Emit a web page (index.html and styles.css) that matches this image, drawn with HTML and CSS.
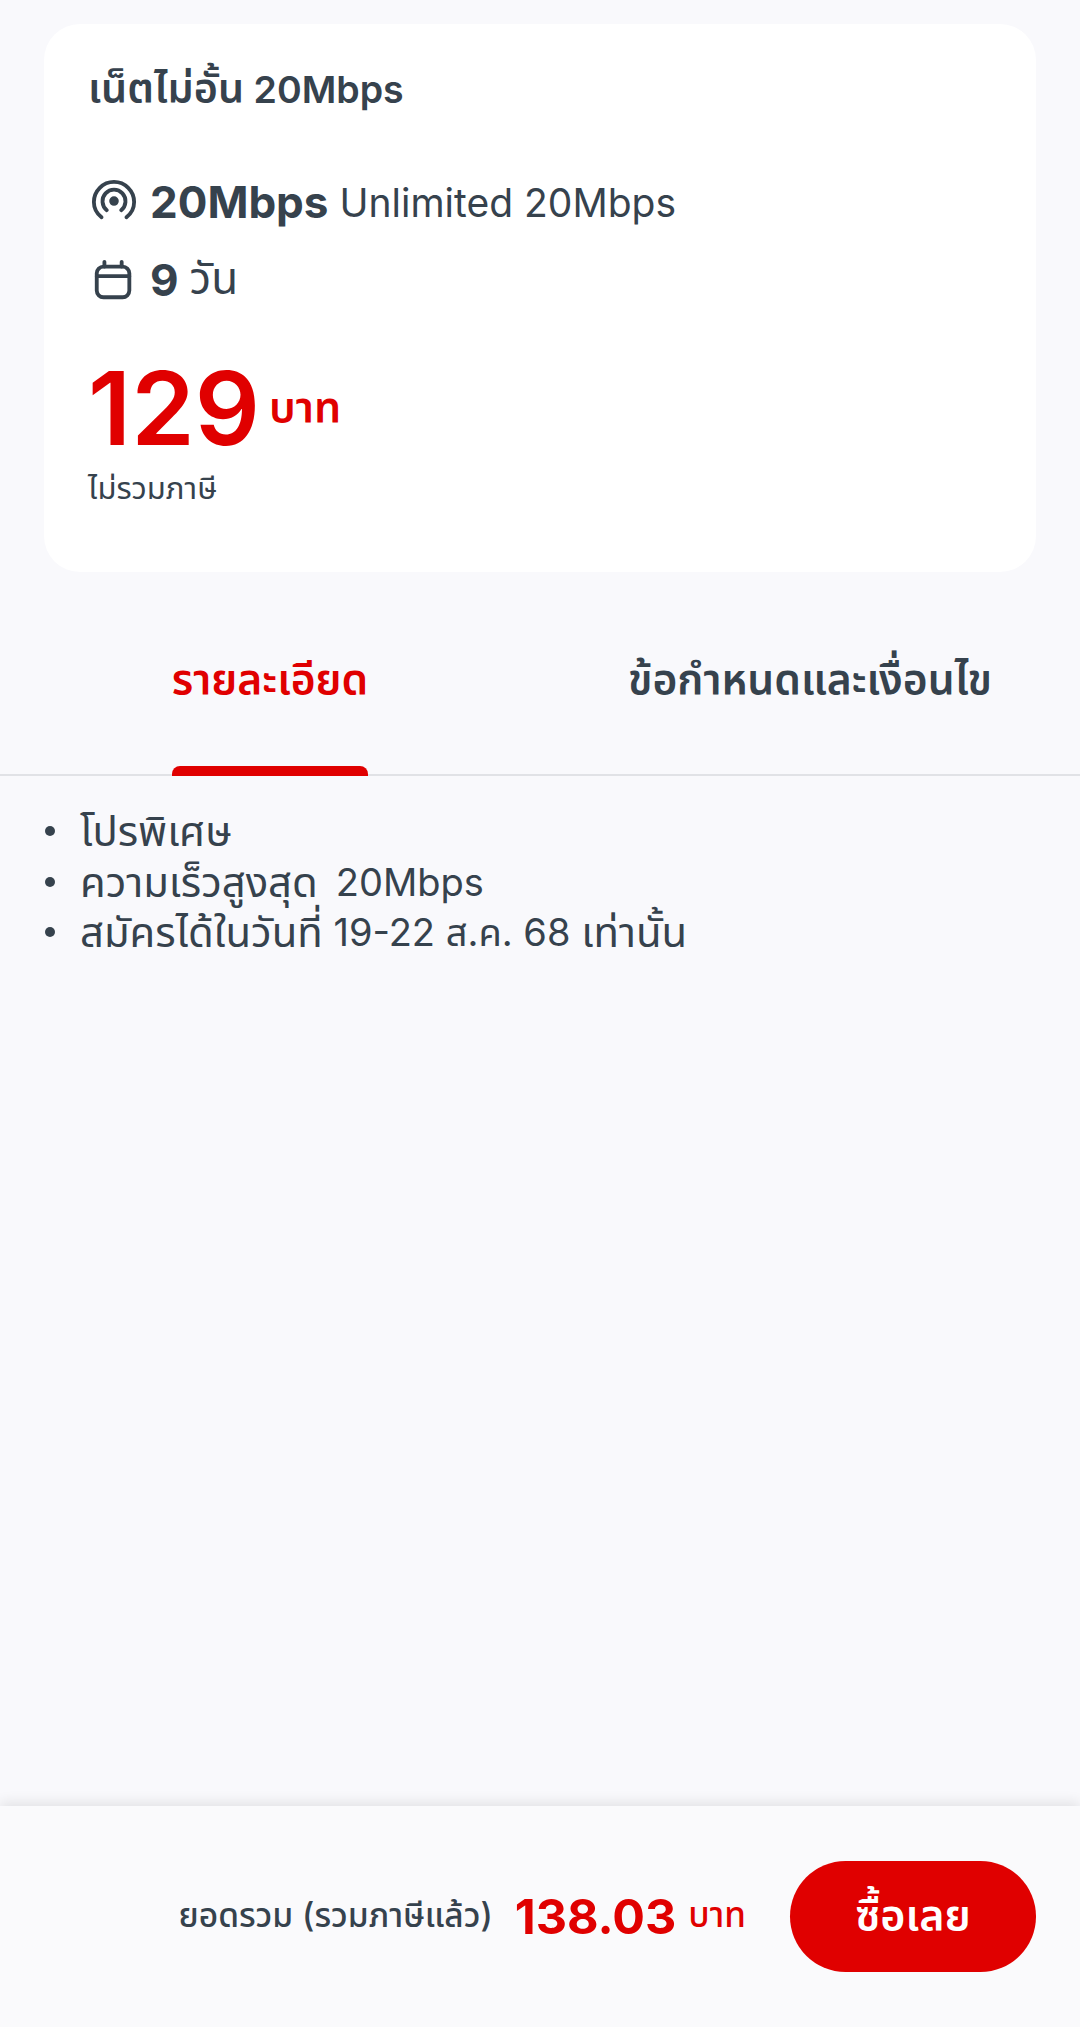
FILE: index.html
```html
<!DOCTYPE html>
<html lang="th">
<head>
<meta charset="utf-8">
<title>เน็ตไม่อั้น 20Mbps</title>
<link rel="stylesheet" href="styles.css">
</head>
<body>
<div class="page">
  <main class="main">
    <section class="card">
      <h1 class="title"><span class="th">เน็ตไม่อั้น</span> 20Mbps</h1>
      <div class="row row-speed">
        <svg class="icon" viewBox="0 0 48 48" fill="none" stroke="#36424d" stroke-width="4" stroke-linecap="round">
          <path d="M11 40C6 36 3 30 3 24a21 21 0 0 1 42 0c0 6-3 12-8 16"/>
          <path d="M16.500 32.500A12 12 0 1 1 31.500 32.500"/>
          <circle cx="24" cy="23" r="4" fill="#36424d" stroke-width="2"/>
        </svg>
        <span class="strong-lg">20Mbps</span>
        <span class="light">Unlimited 20Mbps</span>
      </div>
      <div class="row row-days">
        <svg class="icon" viewBox="0 0 48 48" fill="none" stroke="#36424d" stroke-width="4" stroke-linecap="round" stroke-linejoin="round">
          <rect x="6" y="10" width="34" height="32" rx="7"/>
          <path d="M6 20H40M14 5V10M32 5V10"/>
        </svg>
        <span class="strong-lg">9</span>
        <span class="light days-unit">วัน</span>
      </div>
      <div class="price">
        <span class="price-num">129</span>
        <span class="price-unit">บาท</span>
      </div>
      <p class="vat">ไม่รวมภาษี</p>
    </section>
    <nav class="tabs">
      <div class="tab tab-active"><span class="tab-label">รายละเอียด</span></div>
      <div class="tab"><span class="tab-label">ข้อกำหนดและเงื่อนไข</span></div>
    </nav>
    <ul class="details">
      <li><span class="th">โปรพิเศษ</span></li>
      <li><span class="th">ความเร็วสูงสุด</span> <span class="num">20Mbps</span></li>
      <li><span class="th">สมัครได้ในวันที่</span> 19-22 ส.ค. 68 <span class="th">เท่านั้น</span></li>
    </ul>
  </main>
  <footer class="footer">
    <span class="total-label">ยอดรวม (รวมภาษีแล้ว)</span>
    <span class="total-num">138.03</span>
    <span class="total-unit">บาท</span>
    <button class="buy">ซื้อเลย</button>
  </footer>
</div>
</body>
</html>
```
FILE: styles.css
```css
* { box-sizing: border-box; }
html, body { margin: 0; padding: 0; }
body {
  background: #f9f9fc;
  color: #36424d;
  font-family: Inter, "Noto Sans Thai", "Noto Sans", sans-serif;
}
.page {
  height: 2027px;
  display: flex;
  flex-direction: column;
}
.main { flex: 1; }
.card {
  margin: 24px 44px 0;
  height: 548px;
  padding: 42px 44px 0;
  background: #fff;
  border-radius: 36px;
}
.title {
  margin: 0 0 64px;
  font-size: 37.500px;
  line-height: 44px;
  font-weight: 600;
}
.th { font-size: 1.100em; }
.row {
  display: flex;
  align-items: center;
  height: 52px;
}
.row-speed { margin-bottom: 26px; }
.icon {
  width: 46px;
  height: 46px;
  margin: 0 13px 0 3px;
  flex: none;
}
.strong-lg {
  font-size: 44px;
  font-weight: 700;
  margin-right: 11px;
}
.light {
  font-size: 39px;
  font-weight: 400;
}
.days-unit { font-size: 44px; }
.price {
  display: flex;
  align-items: center;
  margin-top: 40px;
  color: #e00000;
}
.price-num {
  font-size: 102px;
  line-height: 124px;
  font-weight: 600;
}
.price-unit {
  font-size: 43px;
  font-weight: 600;
  margin-left: 9px;
}
.vat {
  margin: 2px 0 0;
  font-size: 31px;
  line-height: 32px;
}
.tabs {
  display: flex;
  height: 204px;
  border-bottom: 2px solid #e1e2e6;
}
.tab {
  flex: 1;
  display: flex;
  justify-content: center;
  font-size: 42.500px;
  font-weight: 600;
}
.tab-label {
  position: relative;
  height: 204px;
  padding-top: 84px;
  line-height: 46px;
}
.tab-active { color: #e00000; }
.tab-active .tab-label::after {
  content: "";
  position: absolute;
  left: 0;
  right: 0;
  bottom: 0;
  height: 10px;
  background: #e00000;
  border-radius: 8px 8px 0 0;
}
.details {
  margin: 30px 0 0;
  padding: 0 0 0 45px;
  list-style: none;
  font-size: 38px;
  line-height: 50.500px;
}
.details li {
  display: flex;
  align-items: center;
  height: 50.500px;
  white-space: pre;
}
.details li::before {
  content: "";
  flex: none;
  width: 10px;
  height: 10px;
  margin-right: 25px;
  border-radius: 50%;
  background: #36424d;
}
.num { margin-left: 18px; }
.footer {
  height: 221px;
  display: flex;
  align-items: center;
  justify-content: flex-end;
  padding: 0 44px;
  background: #fafafc;
  box-shadow: 0 -4px 12px rgba(0, 0, 0, 0.09);
}
.total-label {
  font-size: 33.500px;
  font-weight: 500;
}
.total-num {
  margin-left: 22px;
  font-size: 48.500px;
  font-weight: 700;
  color: #e00000;
}
.total-unit {
  margin-left: 12px;
  font-size: 35px;
  font-weight: 500;
  color: #e00000;
}
.buy {
  margin-left: 44px;
  width: 246px;
  height: 111px;
  border: 0;
  border-radius: 56px;
  background: #e00000;
  color: #fff;
  font: 600 43px Inter, "Noto Sans Thai", "Noto Sans", sans-serif;
}
```
